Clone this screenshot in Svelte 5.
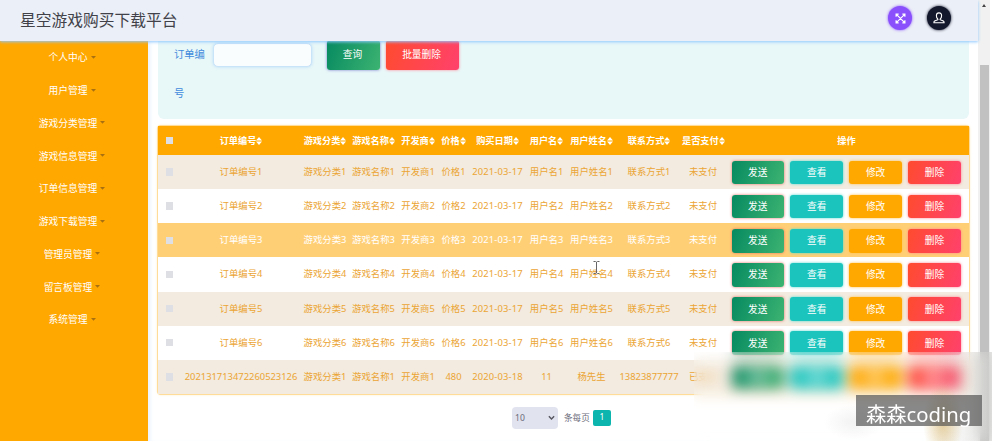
<script>
  const menus = ['个人中心', '用户管理', '游戏分类管理', '游戏信息管理', '订单信息管理', '游戏下载管理', '管理员管理', '留言板管理', '系统管理'];
  const columns = [
    ['订单编号', 120], ['游戏分类', 48], ['游戏名称', 49], ['开发商', 40], ['价格', 31],
    ['购买日期', 57], ['用户名', 41], ['用户姓名', 49], ['联系方式', 66], ['是否支付', 42]
  ];
  const rows = [1, 2, 3, 4, 5, 6].map((n) => [
    `订单编号${n}`, `游戏分类${n}`, `游戏名称${n}`, `开发商${n}`, `价格${n}`,
    '2021-03-17', `用户名${n}`, `用户姓名${n}`, `联系方式${n}`, '未支付'
  ]);
  rows.push(['202131713472260523126', '游戏分类1', '游戏名称1', '开发商1', '480', '2020-03-18', '11', '杨先生', '13823877777', '已支付']);
</script>

<div class="page">
  <div class="window">
    <header>
      <h1>星空游戏购买下载平台</h1>
      <div class="tools">
        <span class="round purple">
          <svg viewBox="0 0 12 12" width="11" height="11" fill="none" stroke="#fff" stroke-width="1.3">
            <path d="M1.2 4V1.2H4M8 1.2h2.8V4M10.8 8v2.8H8M4 10.8H1.2V8M1.5 1.5l9 9M10.5 1.5l-9 9" />
          </svg>
        </span>
        <span class="round dark">
          <svg viewBox="0 0 12 12" width="12" height="12" fill="none" stroke="#fff" stroke-width="1.1">
            <path d="M6 .9c-1.7 0-2.6 1.2-2.6 2.8 0 1.3.5 2.5 1.3 3.200L4.900 7.700 1.600 9.100C1 9.400.9 10 .9 10.700h10.200c0-.7-.1-1.300-.7-1.600L7.100 7.700l.2-.8c.8-.7 1.300-1.900 1.300-3.200C8.600 2.100 7.700.9 6 .9z" />
          </svg>
        </span>
      </div>
    </header>
    <div class="body">
      <nav>
        {#each menus as m}
          <div class="menu"><span>{m}</span><svg viewBox="0 0 5 3" width="5" height="3"><path d="M0 0h5L2.500 2.800z" fill="#a87010" /></svg></div>
        {/each}
      </nav>
      <main>
        <section class="search">
          <label for="order">订单编号</label>
          <input id="order" type="text" />
          <button class="green query">查询</button>
          <button class="red batch">批量删除</button>
        </section>
        <table>
          <colgroup>
            <col style="width:23px" />
            {#each columns as c}<col style="width:{c[1]}px" />{/each}
            <col />
          </colgroup>
          <thead>
            <tr>
              <th><b class="check"></b></th>
              {#each columns as c}
                <th>{c[0]}<svg class="sort" viewBox="0 0 6 8" width="6" height="8"><path d="M0 3.500L3 0l3 3.500zM0 4.500h6L3 8z" fill="#fff" /></svg></th>
              {/each}
              <th>操作</th>
            </tr>
          </thead>
          <tbody>
            {#each rows as r, i}
              <tr class:odd={i % 2 === 0} class:hover={i === 2}>
                <td><b class="check"></b></td>
                {#each r as cell, k}<td class:date={k === 5}>{cell}</td>{/each}
                <td>
                  <div class="actions">
                    <button class="green">发送</button>
                    <button class="teal">查看</button>
                    <button class="orange">修改</button>
                    <button class="red">删除</button>
                  </div>
                </td>
              </tr>
            {/each}
          </tbody>
        </table>
        <div class="pager">
          <div class="select"><span>10</span>
            <svg viewBox="0 0 8 6" width="7" height="6" fill="none" stroke="#55565f" stroke-width="1.600"><path d="M1 1l3 3.200L7 1" /></svg>
          </div>
          <span class="per">条每页</span>
          <span class="current">1</span>
        </div>
      </main>
    </div>
  </div>
  <div class="scrollbar"><i class="up"></i><div class="thumb"></div></div>

  <svg class="cursor" viewBox="0 0 7 13" width="7" height="13" fill="none" stroke="#666" stroke-width="1"><path d="M.5.5h2l1 .7 1-.7h2M3.500 1v11M.5 12.500h2l1-.7 1 .7h2" /></svg>
  <div class="frost"></div>
  <div class="watermark">森森coding</div>
</div>

<style>
  :global(body) { margin: 0; overflow: hidden; }
  .page {
    position: relative; display: flex; width: 992px; height: 441px; overflow: hidden; background: #fff;
    font-family: "Noto Sans", "Noto Sans CJK SC", sans-serif; font-size: 9.4px;
  }
  .window { width: 978px; height: 441px; display: flex; flex-direction: column; }
  header {
    position: relative; z-index: 2; flex: none; height: 41px; box-sizing: border-box; padding: 0 27px 5px 20px;
    display: flex; align-items: center; justify-content: space-between;
    background: #ebeff7; box-shadow: 0 1px 3px #8fc8ff;
  }
  h1 { margin: 4px 0 0; font-size: 15.75px; font-weight: 400; color: #414249; line-height: 24px; }
  .tools { display: flex; gap: 15px; }
  .round { width: 24px; height: 24px; border-radius: 50%; display: flex; align-items: center; justify-content: center; }
  .purple { background: #8950fc; box-shadow: 0 0 3px #8950fc; }
  .dark { background: #14182c; box-shadow: 0 0 3px #14182c; }
  .body { flex: 1; min-height: 0; display: flex; }
  nav { width: 148px; flex: none; background: #ffa800; }
  .menu { height: 32.75px; display: flex; align-items: center; justify-content: center; color: #fff; font-size: 9.75px; gap: 3px; padding-right: 4px; }
  main { flex: 1; min-width: 0; padding: 0 9px 0 10px; box-shadow: inset 4px 0 4px -2px #e8f2ff; }
  .search {
    margin-top: -5px; height: 83px; box-sizing: border-box; padding: 4px 16px 0; display: flex; align-items: flex-start;
    background: #e8f7f8; border-radius: 0 0 6px 6px;
  }
  label { width: 32px; font-size: 10.300px; line-height: 38.500px; color: #3f8bdc; margin: -5px 7px 0 0; word-break: break-all; }
  input {
    width: 99px; height: 24px; box-sizing: border-box; margin: 3px 15px 0 0; border: 1px solid #c9e3f8;
    border-radius: 5px; background: #fafdfd; box-shadow: 0 0 3px #b5dcf8;
  }
  button {
    width: 52.600px; height: 23.500px; padding: 0; border: 0; border-radius: 3px; color: #fff;
    font-family: inherit; font-size: 9.700px; line-height: 23px;
  }
  .query, .batch { height: 29.500px; padding: 0 2px 0 0; }
  .query { width: 53px; margin-right: 6px; }
  .batch { width: 73px; }
  .green { background: linear-gradient(110deg, #078a61, #3cb371); box-shadow: 0 0 3px #e86d62; }
  .query { box-shadow: 0 0 3px #7477cf; }
  .teal { background: #1bc5bd; box-shadow: 0 0 3px #55d6d0; }
  .orange { background: #ffa800; box-shadow: 0 0 3px #ffbe46; }
  .red { background: linear-gradient(110deg, #ff4b2f, #ff416c); box-shadow: 0 0 3px #ff8290; }
  table {
    width: 811px; margin-top: 7px; table-layout: fixed; border-collapse: separate; border-spacing: 0;
    border-radius: 3px; box-shadow: 0 0 0 1px #ffdc97, 0 0 3px #ffd68a;
  }
  th, td { padding: 0; text-align: center; white-space: nowrap; }
  th { height: 29px; background: #ffa800; color: #fff; font-size: 9.200px; font-weight: 700; line-height: 14px; }
  td { height: 34.140px; color: #eba534; line-height: 14px; overflow: hidden; }
  .date { letter-spacing: .16px; }
  .odd td { background: #f3ebdf; }
  .hover td { background: #ffcf76; color: #fff; }
  .sort { vertical-align: -1px; }
  .check { display: block; width: 7.500px; height: 7.500px; margin: 0 auto; background: #dddfe4; }
  .actions { display: flex; gap: 6.300px; padding: 1px 0 0 7.500px; }
  .pager { display: flex; align-items: center; padding: 13px 0 0 354px; height: 22px; color: #6b6c7b; font-size: 8.600px; }
  .select { width: 46px; height: 22px; box-sizing: border-box; padding: 0 3px; display: flex; align-items: center; justify-content: space-between; background: #e1e3ee; border-radius: 4px; }
  .per { margin: 0 3.500px 0 6px; }
  .current { width: 17.500px; height: 15.500px; line-height: 15.500px; border-radius: 2px; text-align: center; color: #fff; background: #0cb5ad; }
  .scrollbar { width: 12px; height: 441px; padding-left: 2px; box-sizing: border-box; background: #f1f1f1; }
  .up { display: block; margin: 4px 0 0 2px; width: 0; border: 2.500px solid transparent; border-bottom: 3px solid #444; border-top: 0; }
  .thumb { width: 9px; height: 376px; margin-top: 58px; background: #c1c1c1; }
  .cursor { position: absolute; left: 593px; top: 261px; }
  .frost {
    position: absolute; left: 694px; top: 352px; width: 298px; height: 89px;
    backdrop-filter: blur(6.5px);
    background:
      radial-gradient(ellipse 20px 38px at 249px 70px, rgba(210, 172, 90, .6), transparent),
      radial-gradient(ellipse 30px 18px at 160px 70px, rgba(190, 190, 190, .2), transparent),
      linear-gradient(90deg, transparent 240px, rgba(195, 195, 190, .4)),
      rgba(255, 255, 255, .08);
  }
  .watermark {
    position: absolute; left: 856px; top: 395px; width: 126px; height: 31px; box-sizing: border-box; padding-left: 10px;
    background: rgba(85, 85, 85, .7); color: #fff; font-size: 20.300px; line-height: 39px; white-space: nowrap;
  }
</style>
